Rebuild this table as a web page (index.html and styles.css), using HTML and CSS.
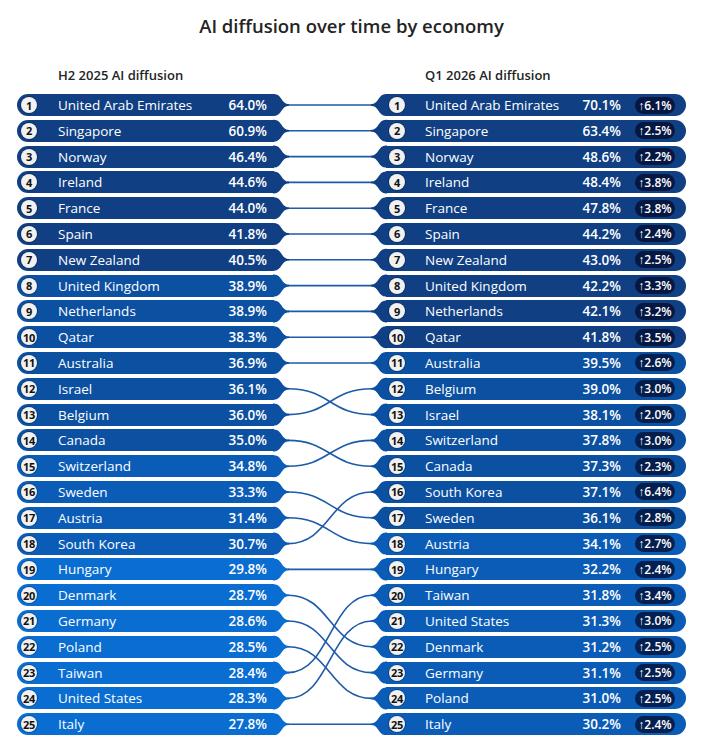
FILE: index.html
```html
<!DOCTYPE html>
<html lang="en">
<head>
  <meta charset="UTF-8">
  <meta name="viewport" content="width=device-width, initial-scale=1.0">
  <link rel="stylesheet" href="styles.css">
</head>
<body>

<div class="page">
  <h1 class="title">AI diffusion over time by economy</h1>

  <div class="chart">
    <div class="column-head head-left">H2 2025 AI diffusion</div>
    <div></div>
    <div class="column-head head-right">Q1 2026 AI diffusion</div>

    <ol class="bars bars-left">
      <li class="bar tier-1"><span class="rank">1</span><span class="name">United Arab Emirates</span><span class="value">64.0%</span></li>
      <li class="bar tier-1"><span class="rank">2</span><span class="name">Singapore</span><span class="value">60.9%</span></li>
      <li class="bar tier-1"><span class="rank">3</span><span class="name">Norway</span><span class="value">46.4%</span></li>
      <li class="bar tier-1"><span class="rank">4</span><span class="name">Ireland</span><span class="value">44.6%</span></li>
      <li class="bar tier-1"><span class="rank">5</span><span class="name">France</span><span class="value">44.0%</span></li>
      <li class="bar tier-1"><span class="rank">6</span><span class="name">Spain</span><span class="value">41.8%</span></li>
      <li class="bar tier-1"><span class="rank">7</span><span class="name">New Zealand</span><span class="value">40.5%</span></li>
      <li class="bar tier-2"><span class="rank">8</span><span class="name">United Kingdom</span><span class="value">38.9%</span></li>
      <li class="bar tier-2"><span class="rank">9</span><span class="name">Netherlands</span><span class="value">38.9%</span></li>
      <li class="bar tier-2"><span class="rank">10</span><span class="name">Qatar</span><span class="value">38.3%</span></li>
      <li class="bar tier-2"><span class="rank">11</span><span class="name">Australia</span><span class="value">36.9%</span></li>
      <li class="bar tier-2"><span class="rank">12</span><span class="name">Israel</span><span class="value">36.1%</span></li>
      <li class="bar tier-2"><span class="rank">13</span><span class="name">Belgium</span><span class="value">36.0%</span></li>
      <li class="bar tier-2"><span class="rank">14</span><span class="name">Canada</span><span class="value">35.0%</span></li>
      <li class="bar tier-3"><span class="rank">15</span><span class="name">Switzerland</span><span class="value">34.8%</span></li>
      <li class="bar tier-3"><span class="rank">16</span><span class="name">Sweden</span><span class="value">33.3%</span></li>
      <li class="bar tier-3"><span class="rank">17</span><span class="name">Austria</span><span class="value">31.4%</span></li>
      <li class="bar tier-3"><span class="rank">18</span><span class="name">South Korea</span><span class="value">30.7%</span></li>
      <li class="bar tier-4"><span class="rank">19</span><span class="name">Hungary</span><span class="value">29.8%</span></li>
      <li class="bar tier-4"><span class="rank">20</span><span class="name">Denmark</span><span class="value">28.7%</span></li>
      <li class="bar tier-4"><span class="rank">21</span><span class="name">Germany</span><span class="value">28.6%</span></li>
      <li class="bar tier-4"><span class="rank">22</span><span class="name">Poland</span><span class="value">28.5%</span></li>
      <li class="bar tier-4"><span class="rank">23</span><span class="name">Taiwan</span><span class="value">28.4%</span></li>
      <li class="bar tier-4"><span class="rank">24</span><span class="name">United States</span><span class="value">28.3%</span></li>
      <li class="bar tier-4"><span class="rank">25</span><span class="name">Italy</span><span class="value">27.8%</span></li>
    </ol>

    <svg class="links" width="112" height="641.2" viewBox="0 0 112 641.2">
      <defs>
        <path id="taper-left" d="M-1,-11 H0 C8,-11 7,-0.8 15,-0.8 V0.8 C7,0.8 8,11 0,11 H-1 Z"/>
        <path id="taper-right" d="M113,-11 H112 C104,-11 105,-0.8 97,-0.8 V0.8 C105,0.8 104,11 112,11 H113 Z"/>
      </defs>

      <!-- rank changes -->
      <g class="link-lines">
        <path d="M14,11 H98"/>
        <path d="M14,36.8 H98"/>
        <path d="M14,62.6 H98"/>
        <path d="M14,88.4 H98"/>
        <path d="M14,114.2 H98"/>
        <path d="M14,140 H98"/>
        <path d="M14,165.8 H98"/>
        <path d="M14,191.6 H98"/>
        <path d="M14,217.4 H98"/>
        <path d="M14,243.2 H98"/>
        <path d="M14,269 H98"/>
        <path d="M14,294.8 C56,294.8 56,320.6 98,320.6"/>
        <path d="M14,320.6 C56,320.6 56,294.8 98,294.8"/>
        <path d="M14,346.4 C56,346.4 56,372.2 98,372.2"/>
        <path d="M14,372.2 C56,372.2 56,346.4 98,346.4"/>
        <path d="M14,398 C56,398 56,423.8 98,423.8"/>
        <path d="M14,423.8 C56,423.8 56,449.6 98,449.6"/>
        <path d="M14,449.6 C56,449.6 56,398 98,398"/>
        <path d="M14,475.4 H98"/>
        <path d="M14,501.2 C56,501.2 56,552.8 98,552.8"/>
        <path d="M14,527 C56,527 56,578.6 98,578.6"/>
        <path d="M14,552.8 C56,552.8 56,604.4 98,604.4"/>
        <path d="M14,578.6 C56,578.6 56,501.2 98,501.2"/>
        <path d="M14,604.4 C56,604.4 56,527 98,527"/>
        <path d="M14,630.2 H98"/>
      </g>

      <!-- bar tails, left -->
      <use href="#taper-left" y="11" class="fill-1"/>
      <use href="#taper-left" y="36.8" class="fill-1"/>
      <use href="#taper-left" y="62.6" class="fill-1"/>
      <use href="#taper-left" y="88.4" class="fill-1"/>
      <use href="#taper-left" y="114.2" class="fill-1"/>
      <use href="#taper-left" y="140" class="fill-1"/>
      <use href="#taper-left" y="165.8" class="fill-1"/>
      <use href="#taper-left" y="191.6" class="fill-2"/>
      <use href="#taper-left" y="217.4" class="fill-2"/>
      <use href="#taper-left" y="243.2" class="fill-2"/>
      <use href="#taper-left" y="269" class="fill-2"/>
      <use href="#taper-left" y="294.8" class="fill-2"/>
      <use href="#taper-left" y="320.6" class="fill-2"/>
      <use href="#taper-left" y="346.4" class="fill-2"/>
      <use href="#taper-left" y="372.2" class="fill-3"/>
      <use href="#taper-left" y="398" class="fill-3"/>
      <use href="#taper-left" y="423.8" class="fill-3"/>
      <use href="#taper-left" y="449.6" class="fill-3"/>
      <use href="#taper-left" y="475.4" class="fill-4"/>
      <use href="#taper-left" y="501.2" class="fill-4"/>
      <use href="#taper-left" y="527" class="fill-4"/>
      <use href="#taper-left" y="552.8" class="fill-4"/>
      <use href="#taper-left" y="578.6" class="fill-4"/>
      <use href="#taper-left" y="604.4" class="fill-4"/>
      <use href="#taper-left" y="630.2" class="fill-4"/>

      <!-- bar tails, right -->
      <use href="#taper-right" y="11" class="fill-1"/>
      <use href="#taper-right" y="36.8" class="fill-1"/>
      <use href="#taper-right" y="62.6" class="fill-1"/>
      <use href="#taper-right" y="88.4" class="fill-1"/>
      <use href="#taper-right" y="114.2" class="fill-1"/>
      <use href="#taper-right" y="140" class="fill-1"/>
      <use href="#taper-right" y="165.8" class="fill-1"/>
      <use href="#taper-right" y="191.6" class="fill-1"/>
      <use href="#taper-right" y="217.4" class="fill-1"/>
      <use href="#taper-right" y="243.2" class="fill-1"/>
      <use href="#taper-right" y="269" class="fill-2"/>
      <use href="#taper-right" y="294.8" class="fill-2"/>
      <use href="#taper-right" y="320.6" class="fill-2"/>
      <use href="#taper-right" y="346.4" class="fill-2"/>
      <use href="#taper-right" y="372.2" class="fill-2"/>
      <use href="#taper-right" y="398" class="fill-2"/>
      <use href="#taper-right" y="423.8" class="fill-2"/>
      <use href="#taper-right" y="449.6" class="fill-3"/>
      <use href="#taper-right" y="475.4" class="fill-3"/>
      <use href="#taper-right" y="501.2" class="fill-3"/>
      <use href="#taper-right" y="527" class="fill-3"/>
      <use href="#taper-right" y="552.8" class="fill-3"/>
      <use href="#taper-right" y="578.6" class="fill-3"/>
      <use href="#taper-right" y="604.4" class="fill-3"/>
      <use href="#taper-right" y="630.2" class="fill-3"/>
    </svg>

    <ol class="bars bars-right">
      <li class="bar tier-1"><span class="rank">1</span><span class="name">United Arab Emirates</span><span class="value">70.1%</span><span class="delta">↑6.1%</span></li>
      <li class="bar tier-1"><span class="rank">2</span><span class="name">Singapore</span><span class="value">63.4%</span><span class="delta">↑2.5%</span></li>
      <li class="bar tier-1"><span class="rank">3</span><span class="name">Norway</span><span class="value">48.6%</span><span class="delta">↑2.2%</span></li>
      <li class="bar tier-1"><span class="rank">4</span><span class="name">Ireland</span><span class="value">48.4%</span><span class="delta">↑3.8%</span></li>
      <li class="bar tier-1"><span class="rank">5</span><span class="name">France</span><span class="value">47.8%</span><span class="delta">↑3.8%</span></li>
      <li class="bar tier-1"><span class="rank">6</span><span class="name">Spain</span><span class="value">44.2%</span><span class="delta">↑2.4%</span></li>
      <li class="bar tier-1"><span class="rank">7</span><span class="name">New Zealand</span><span class="value">43.0%</span><span class="delta">↑2.5%</span></li>
      <li class="bar tier-1"><span class="rank">8</span><span class="name">United Kingdom</span><span class="value">42.2%</span><span class="delta">↑3.3%</span></li>
      <li class="bar tier-1"><span class="rank">9</span><span class="name">Netherlands</span><span class="value">42.1%</span><span class="delta">↑3.2%</span></li>
      <li class="bar tier-1"><span class="rank">10</span><span class="name">Qatar</span><span class="value">41.8%</span><span class="delta">↑3.5%</span></li>
      <li class="bar tier-2"><span class="rank">11</span><span class="name">Australia</span><span class="value">39.5%</span><span class="delta">↑2.6%</span></li>
      <li class="bar tier-2"><span class="rank">12</span><span class="name">Belgium</span><span class="value">39.0%</span><span class="delta">↑3.0%</span></li>
      <li class="bar tier-2"><span class="rank">13</span><span class="name">Israel</span><span class="value">38.1%</span><span class="delta">↑2.0%</span></li>
      <li class="bar tier-2"><span class="rank">14</span><span class="name">Switzerland</span><span class="value">37.8%</span><span class="delta">↑3.0%</span></li>
      <li class="bar tier-2"><span class="rank">15</span><span class="name">Canada</span><span class="value">37.3%</span><span class="delta">↑2.3%</span></li>
      <li class="bar tier-2"><span class="rank">16</span><span class="name">South Korea</span><span class="value">37.1%</span><span class="delta">↑6.4%</span></li>
      <li class="bar tier-2"><span class="rank">17</span><span class="name">Sweden</span><span class="value">36.1%</span><span class="delta">↑2.8%</span></li>
      <li class="bar tier-3"><span class="rank">18</span><span class="name">Austria</span><span class="value">34.1%</span><span class="delta">↑2.7%</span></li>
      <li class="bar tier-3"><span class="rank">19</span><span class="name">Hungary</span><span class="value">32.2%</span><span class="delta">↑2.4%</span></li>
      <li class="bar tier-3"><span class="rank">20</span><span class="name">Taiwan</span><span class="value">31.8%</span><span class="delta">↑3.4%</span></li>
      <li class="bar tier-3"><span class="rank">21</span><span class="name">United States</span><span class="value">31.3%</span><span class="delta">↑3.0%</span></li>
      <li class="bar tier-3"><span class="rank">22</span><span class="name">Denmark</span><span class="value">31.2%</span><span class="delta">↑2.5%</span></li>
      <li class="bar tier-3"><span class="rank">23</span><span class="name">Germany</span><span class="value">31.1%</span><span class="delta">↑2.5%</span></li>
      <li class="bar tier-3"><span class="rank">24</span><span class="name">Poland</span><span class="value">31.0%</span><span class="delta">↑2.5%</span></li>
      <li class="bar tier-3"><span class="rank">25</span><span class="name">Italy</span><span class="value">30.2%</span><span class="delta">↑2.4%</span></li>
    </ol>
  </div>
</div>

</body>
</html>
```

FILE: styles.css
```css
body {
  margin: 0;
  background-color: #ffffff;
  color: #242424;
  font-family: 'Open Sans', 'Noto Sans', Arial, sans-serif;
}
.page {
  width: 703px;
}
.title {
  margin: 12px 0 0 0;
  font-size: 18.5px;
  line-height: 28px;
  font-weight: 600;
  text-align: center;
  color: #242424;
}
.chart {
  display: grid;
  grid-template-columns: 257px 112px 300px;
  grid-template-rows: auto auto;
  row-gap: 10px;
  margin: 26px 0 0 17px;
}
.column-head {
  font-size: 13px;
  line-height: 18px;
  font-weight: 600;
}
.head-left {
  padding-left: 41px;
}
.head-right {
  padding-left: 39px;
}
.bars {
  list-style: none;
  margin: 0;
  padding: 0;
  display: grid;
  grid-auto-rows: 22px;
  row-gap: 3.8px;
}
.bar {
  display: flex;
  align-items: center;
  height: 22px;
  color: #ffffff;
  font-size: 13.5px;
}
.bars-left .bar {
  border-radius: 11px 0 0 11px;
  padding-left: 4px;
  padding-right: 7px;
}
.bars-right .bar {
  border-radius: 0 11px 11px 0;
  padding-left: 3px;
  padding-right: 11px;
}
.rank {
  flex: none;
  width: 16px;
  height: 16px;
  border-radius: 50%;
  background-color: #f1f1f1;
  box-shadow: 0 0 0 1px rgba(0, 0, 0, 0.25);
  color: #111111;
  font-size: 11px;
  font-weight: 700;
  letter-spacing: -0.4px;
  display: flex;
  align-items: center;
  justify-content: center;
}
.name {
  flex: 1;
  margin-left: 21px;
  white-space: nowrap;
}
.bars-right .name {
  margin-left: 20px;
}
.value {
  font-weight: 600;
}
.delta {
  margin-left: 14px;
  width: 40px;
  height: 17px;
  border-radius: 9px;
  background-color: rgba(3, 10, 40, 0.72);
  font-size: 12px;
  font-weight: 600;
  display: flex;
  align-items: center;
  justify-content: center;
}
.tier-1 { background-color: #103f84; }
.tier-2 { background-color: #0c50a2; }
.tier-3 { background-color: #0b5cb7; }
.tier-4 { background-color: #0a6dd2; }
.links {
  overflow: visible;
  display: block;
}
.link-lines path {
  fill: none;
  stroke: #1d5aa8;
  stroke-width: 1.6;
}
.fill-1 { fill: #103f84; }
.fill-2 { fill: #0c50a2; }
.fill-3 { fill: #0b5cb7; }
.fill-4 { fill: #0a6dd2; }
```
